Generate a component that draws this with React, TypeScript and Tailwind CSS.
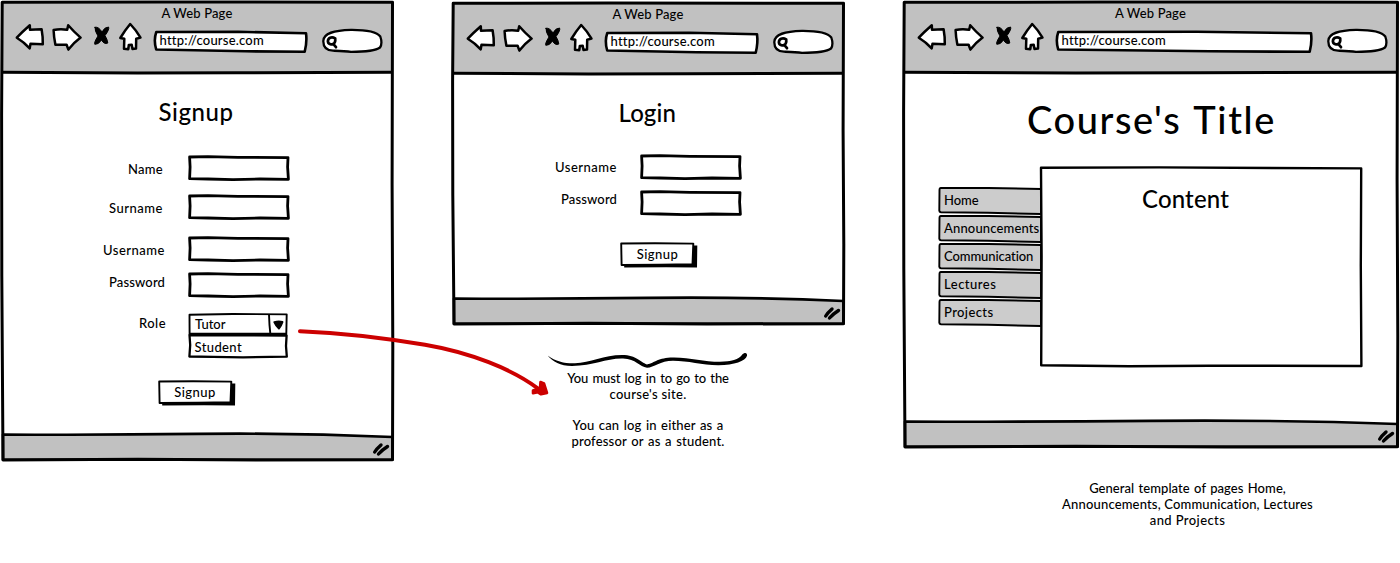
import type { ReactNode } from "react";

type WindowProps = { width: number; height: number; children: ReactNode };

/** Hand-drawn outline of a browser window: border, header rule and footer bar. */
function WindowFrame({ width: w, height: h }: { width: number; height: number }) {
  const r = w - 1.5;
  const f = h - 26.5;
  const b = h - 1.3;
  return (
    <svg className="pointer-events-none absolute inset-0 overflow-visible" width={w} height={h} fill="none" stroke="#000" strokeWidth="3" strokeLinejoin="round">
      <path d={`M2.5 2.3 L${r} 2 L${r} 72.3 L2.5 72.3 Z`} fill="#c1c1c1" stroke="none" />
      <path d={`M3 ${f} Q${w * 0.25} ${f + 0.6} ${w * 0.5} ${f - 0.6} T${r} ${f + 2.5} L${r} ${b} L3 ${b} Z`} fill="#c1c1c1" strokeWidth="2.6" />
      <path d={`M2.2 2.3 L${w * 0.4} 2 L${r} 2.2 L${r - 0.4} ${h * 0.4} L${r + 0.3} ${h * 0.75} L${r} ${b} L${w * 0.65} ${b + 0.3} L${w * 0.35} ${b - 0.4} L3 ${b + 0.3} L1.8 ${h * 0.6} L1.6 ${h * 0.25} Z`} />
      <path d={`M2 72.3 L${w * 0.35} 73 L${w * 0.6} 72.8 L${r} 72.2`} />
      <path d={`M${w - 19.3} ${h - 9} Q${w - 17.5} ${h - 12} ${w - 13} ${h - 16} M${w - 15.5} ${h - 7} Q${w - 12} ${h - 11} ${w - 6.5} ${h - 14.5}`} strokeWidth="3.4" strokeLinecap="round" />
    </svg>
  );
}

function NavIcons() {
  return (
    <svg width="128" height="30" viewBox="15 22 128 30" fill="#fff" stroke="#000" strokeWidth="2.5" strokeLinejoin="round" strokeLinecap="round" className="shrink-0">
      <path d="M16.8 37.7 Q22 32 29.8 25.2 L30 29.7 L41.6 29.2 Q43 37 42.8 44.2 L30.5 43.8 L29.7 48.4 Q24 42 16.8 37.7 Z" />
      <path d="M53.6 30 Q60 28.5 67.2 29.7 L68.2 25.3 Q74 32 80.6 37.6 Q74 42.5 68.4 49.6 L66.6 44.7 L55.4 44.7 Q53.8 37 53.6 30 Z" />
      <path d="M95 27.3 Q98.5 26.3 102 32 Q104.5 27 108.6 27 Q109.6 29.5 105 35.6 Q107.5 39.6 107.8 43 Q104.5 44.9 101.4 40 Q98.5 44.8 94.8 44.3 Q93.8 42.5 98 36 Q94.6 31 95 27.3 Z" fill="#000" strokeWidth="1" />
      <path d="M130.2 24 Q125.5 29.5 120.3 38 L124.3 38.8 L124 48.8 L128.3 49.2 L128.8 45 L131.7 44.8 L132.5 49 L136 48.6 L136.2 38.8 L140.5 37.6 Q136 30 130.2 24 Z" />
    </svg>
  );
}

function AddressBar({ width: w }: { width: number }) {
  return (
    <div className="relative mt-[9px] ml-[11px] h-[22px] flex-none pl-[5.5px] text-[13px] leading-4 tracking-[0.21px]" style={{ width: w }}>
      <svg className="absolute inset-0 overflow-visible" width={w} height="22" fill="#fff" stroke="#000" strokeWidth="2.6" strokeLinejoin="round">
        <path d={`M2.3 1 L${w * 0.55} 0.8 L${w - 1} 2.3 Q${w + 0.2} 11 ${w - 2.3} 20.8 L${w * 0.6} 20.3 L2.2 18.5 Q-0.6 9 2.3 1 Z`} />
      </svg>
      <span className="relative block pt-px">http://course.com</span>
    </div>
  );
}

function SearchBox() {
  return (
    <svg className="mt-[6px] ml-[14px] shrink-0" width="62" height="26" viewBox="321 28 62 26" fill="#fff" stroke="#000" strokeWidth="2.3" strokeLinecap="round">
      <path d="M323.3 41 C323.5 33 334 30.4 351 29.8 C367 29.7 377 32 380.3 36.5 C381.5 40 382.3 44 380 47.5 C376 50.5 365 51.8 351 51.8 C345 50.8 339 50.8 333 50.7 C327 50.4 323.2 47.5 323.3 41 Z" />
      <path d="M335.2 38.4 C331.5 36.3 327.8 38 327.9 41.5 C328.5 45.2 333.3 45 334.7 42.6 Q335.6 40.8 335.2 38.4 M333.2 43.8 L336 47.2" strokeWidth="2.7" />
    </svg>
  );
}

function BrowserWindow({ width, height, children }: WindowProps) {
  return (
    <section className="relative flex shrink-0 flex-col" style={{ width, height }}>
      <WindowFrame width={width} height={height} />
      <header className="relative h-[73px] shrink-0">
        <p className="pt-[5px] text-center text-[13px] leading-4 tracking-[0.14px]">A Web Page</p>
        <div className="flex items-start pt-px pl-[15px]">
          <NavIcons />
          <AddressBar width={width - 241} />
          <SearchBox />
        </div>
      </header>
      <div className="relative flex-1">{children}</div>
    </section>
  );
}

function SketchInput() {
  return (
    <svg width="102" height="26" fill="#fff" stroke="#000" strokeWidth="2.8" strokeLinejoin="round" className="shrink-0">
      <path d="M1.6 2 L20 1.7 L50 2.3 L100 2.6 L99.6 12 L100.4 24.3 L72 24 L45 24.6 L20 24 L1.6 23.7 L2.1 12 Z" />
    </svg>
  );
}

function SketchButton({ className }: { className: string }) {
  return (
    <button className={`relative block h-[26px] w-[78px] pr-[3px] text-[13px] leading-4 ${className}`}>
      <svg className="absolute inset-0" width="78" height="26" strokeLinejoin="round">
        <path d="M4 5 L74 3.5 L77.3 3.5 L77 25.5 L46 25.2 L4.2 25.5 Z" />
        <path d="M1.2 1.5 L35 1.2 L73.3 1.6 L72.5 22.2 L40 22.6 L1.6 23 Z" fill="#fff" stroke="#000" strokeWidth="1.9" />
      </svg>
      <span className="relative -top-px block tracking-[0.45px]">Signup</span>
    </button>
  );
}

function RoleSelect() {
  return (
    <div className="relative h-[45px] w-[100px] text-[13px] leading-4">
      <svg className="absolute inset-0 overflow-visible" width="100" height="45" fill="#fff" stroke="#000" strokeWidth="1.9" strokeLinejoin="round">
        <path d="M1.5 1.7 L45 1 L98.7 1.4 L98.3 20.8 L1.6 20.8 Z" />
        <path d="M81 1.5 Q81.3 12 82.3 20.5" fill="none" />
        <path d="M1.5 22 L98.6 22.5 L98 33 L98.8 43.6 L55 44.4 L25 43.8 L1.4 43.5 L2.2 32 Z" strokeWidth="2.3" />
        <path d="M1.5 21.6 H99" strokeWidth="2.8" />
        <path d="M86.3 9.2 Q90.5 8 94.5 9 Q93.2 13 90.9 15.6 Q88 13 86.3 9.2 Z" fill="#000" />
      </svg>
      <span className="relative block pt-[3px] pl-[7px]">Tutor</span>
      <span className="relative block pt-[7px] pl-[6.5px] tracking-[0.38px]">Student</span>
    </div>
  );
}

function Row({ label, labelClass, className, children }: { label: string; labelClass: string; className: string; children: ReactNode }) {
  return (
    <div className={`flex items-start ${className}`}>
      <label className={`shrink-0 text-right text-[13px] leading-4 ${labelClass}`}>{label}</label>
      {children}
    </div>
  );
}

const menu = [
  { label: "Home", tracking: "tracking-[-0.07px]" },
  { label: "Announcements", tracking: "tracking-[0.15px]" },
  { label: "Communication", tracking: "tracking-[-0.08px]" },
  { label: "Lectures", tracking: "tracking-[0.5px]" },
  { label: "Projects", tracking: "tracking-[0.4px]" },
];

function MenuTab({ label, tracking }: { label: string; tracking: string }) {
  return (
    <li className="relative h-7 pt-[5px] pl-[6px] text-[13px] leading-4">
      <svg className="absolute inset-0 overflow-visible" width="104" height="28" fill="#ccc" stroke="#000" strokeWidth="1.9" strokeLinejoin="round">
        <path d="M3 0.9 L50 1 L103 2 L103 27 L50 25.8 L3 25.3 Q1.2 25 1.3 23.5 L1.5 3 Q1.5 1 3 0.9 Z" />
      </svg>
      <span className={`relative ${tracking}`}>{label}</span>
    </li>
  );
}

function Brace() {
  return (
    <svg className="block" width="202" height="18" viewBox="547 352 202 18">
      <path d="M547.6 355.4 C556 361.5 565 363.6 575 363.3 C590 362.8 604 355.1 622 355.1 C637 355.1 640 362.5 647 364.4 C655 362.5 658 357.6 673 357.4 C690 357.2 704 361.8 720 361.8 C731 361.8 739 359.6 742.3 354.6 C744.5 352.2 747.5 352.6 747 355.8 C745.5 361 734 365.3 718 365.2 C702 365 688 360.8 673 360.8 C660 360.9 654 367.6 647 367.8 C639.5 366.8 636 359 623 358.6 C606 358.2 594 366 572 366 C560 365.8 553 361.5 547.6 355.4 Z" />
    </svg>
  );
}

function FlowArrow() {
  return (
    <svg className="pointer-events-none absolute top-0 left-0" width="560" height="410" fill="none" stroke="#c00" strokeLinecap="round" strokeLinejoin="round">
      <path d="M300 331.2 C340 332.8 385 338 425 344.8 C470 352.5 512 369 538 388.5" strokeWidth="4" />
      <path d="M540.5 382 L544 383.5 L547 393 L541 394.3 L538 392.3 L533 393.3 L533 390.5 L540 388 Z" fill="#c00" strokeWidth="2.6" />
    </svg>
  );
}

export default function App() {
  return (
    <main className="relative flex h-[563px] w-[1400px] items-start overflow-hidden bg-white font-['Lato','Liberation_Sans',sans-serif] font-medium text-black">
      <BrowserWindow width={394} height={461}>
        <h1 className="pt-6 pl-[158.5px] text-[24px] leading-[30px] tracking-[0.55px]">Signup</h1>
        <Row label="Name" className="mt-7" labelClass="mr-[25px] w-[163px] pt-[6px] tracking-[0.28px]"><SketchInput /></Row>
        <Row label="Surname" className="mt-[13px]" labelClass="mr-[25px] w-[163px] pt-[6px] tracking-[0.52px]"><SketchInput /></Row>
        <Row label="Username" className="mt-4" labelClass="mr-[23px] w-[165px] pt-[6px] tracking-[0.5px]"><SketchInput /></Row>
        <Row label="Password" className="mt-[10px]" labelClass="mr-[23px] w-[165px] pt-[2px] tracking-[0.14px]"><SketchInput /></Row>
        <Row label="Role" className="mt-[15px]" labelClass="mr-[22px] w-[166px] pt-[2px] tracking-[0.46px]"><RoleSelect /></Row>
        <SketchButton className="mt-[22px] ml-[157.5px]" />
      </BrowserWindow>

      <div className="ml-[57px] flex w-[394px] shrink-0 flex-col pt-px">
        <BrowserWindow width={394} height={324}>
          <h1 className="pt-6 pl-[167.5px] text-[24px] leading-[30px] tracking-[0.11px]">Login</h1>
          <Row label="Username" className="mt-[26px]" labelClass="mr-[23px] w-[166px] pt-[5px] tracking-[0.5px]"><SketchInput /></Row>
          <Row label="Password" className="mt-[10px]" labelClass="mr-[23px] w-[166px] pt-px tracking-[0.14px]"><SketchInput /></Row>
          <SketchButton className="mt-[26px] ml-[169px]" />
        </BrowserWindow>
        <div className="mt-[27px] ml-24 w-[202px] text-center text-[13px] leading-4">
          <Brace />
          <p className="tracking-[-0.1px] [word-spacing:1px]">You must log in to go to the</p>
          <p className="tracking-[0.31px]">course's site.</p>
          <p className="mt-[15px] tracking-[0.16px] [word-spacing:1px]">You can log in either as a</p>
          <p className="tracking-[0.2px] [word-spacing:1px]">professor or as a student.</p>
        </div>
      </div>

      <div className="ml-[57px] flex w-[497px] shrink-0 flex-col">
        <BrowserWindow width={497} height={448}>
          <h1 className="pt-[22px] pl-[125px] text-[38px] leading-[48px] tracking-[1.59px] [word-spacing:2px]">Course's Title</h1>
          <div className="mt-[23px] flex pl-9">
            <ul className="mt-[21px] w-[101px] shrink-0">
              {menu.map((item) => <MenuTab key={item.label} {...item} />)}
            </ul>
            <div className="relative h-[202px] w-[324px]">
              <svg className="absolute inset-0" width="324" height="202" fill="#fff" stroke="#000" strokeWidth="2.4" strokeLinejoin="round">
                <path d="M2 1.8 L120 1.4 L322.2 2.4 L321.8 100 L322.4 200 L170 199.7 L90 200.2 L2.2 199.3 L2.6 90 Z" />
              </svg>
              <h2 className="relative pt-[18px] pl-[103px] text-[24px] leading-[30px] tracking-[0.15px]">Content</h2>
            </div>
          </div>
        </BrowserWindow>
        <div className="mt-8 ml-[75px] w-[421px] text-center text-[13px] leading-4">
          <p className="tracking-[0.06px] [word-spacing:1px]">General template of pages Home,</p>
          <p className="tracking-[0.16px]">Announcements, Communication, Lectures</p>
          <p className="tracking-[0.4px]">and Projects</p>
        </div>
      </div>
      <FlowArrow />
    </main>
  );
}
